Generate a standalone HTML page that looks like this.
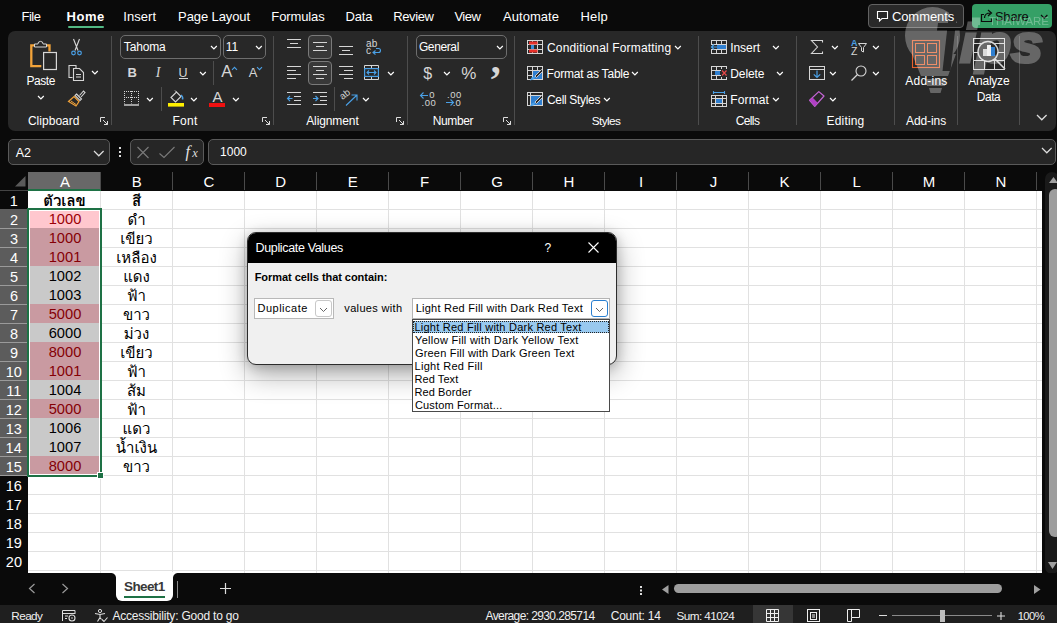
<!DOCTYPE html><html><head><meta charset="utf-8"><title>Excel</title><style>
*{box-sizing:border-box;margin:0;padding:0}
html,body{width:1057px;height:623px;overflow:hidden;background:#0a0a0a}
body{position:relative;font-family:"Liberation Sans","DejaVu Sans",sans-serif;color:#fff;font-size:12px}
.a{position:absolute;white-space:nowrap}
.t{position:absolute;white-space:nowrap;color:#fff}
.sf{font-family:"Liberation Serif","DejaVu Serif",serif}
.sep{position:absolute;width:1px;background:#4d4d4d;top:36px;height:89px}
.box{position:absolute;border:1px solid #6e6e6e;border-radius:5px;background:#282828;height:24px;top:35px}
.th{font-family:"Liberation Sans","Loma","Noto Sans Thai","Sarabun","DejaVu Sans",sans-serif}
.c{position:absolute;width:71px;height:18px;text-align:center;font-size:14.67px;line-height:18px;color:#000}
.c.th{font-size:15px;line-height:20px}
svg{position:absolute;overflow:visible}
</style></head><body>
<div class="t" style="left:21.4px;top:9px;font-size:13px;line-height:15px;height:15px;letter-spacing:-0.43px;">File</div>
<div class="t" style="left:66.6px;top:9px;font-size:13px;line-height:15px;height:15px;letter-spacing:0.53px;font-weight:bold;">Home</div>
<div class="t" style="left:123.3px;top:9px;font-size:13px;line-height:15px;height:15px;letter-spacing:0.06px;">Insert</div>
<div class="t" style="left:178.1px;top:9px;font-size:13px;line-height:15px;height:15px;letter-spacing:-0.1px;">Page Layout</div>
<div class="t" style="left:271.3px;top:9px;font-size:13px;line-height:15px;height:15px;letter-spacing:-0.11px;">Formulas</div>
<div class="t" style="left:345.6px;top:9px;font-size:13px;line-height:15px;height:15px;letter-spacing:-0.17px;">Data</div>
<div class="t" style="left:393.2px;top:9px;font-size:13px;line-height:15px;height:15px;letter-spacing:-0.38px;">Review</div>
<div class="t" style="left:454.4px;top:9px;font-size:13px;line-height:15px;height:15px;letter-spacing:-0.5px;">View</div>
<div class="t" style="left:503px;top:9px;font-size:13px;line-height:15px;height:15px;letter-spacing:0.04px;">Automate</div>
<div class="t" style="left:580.4px;top:9px;font-size:13px;line-height:15px;height:15px;letter-spacing:0.23px;">Help</div>
<div class="a" style="left:67.5px;top:26px;width:36.5px;height:2px;background:#52b884;border-radius:1px"></div>
<div class="a" style="left:868px;top:4px;width:96px;height:24px;background:#292929;border:1px solid #626262;border-radius:4px"></div>
<svg style="left:876px;top:10px" width="13" height="13" viewBox="0 0 13 13"><path d="M1.5 1.5h10v7h-5.5l-2.5 2.5v-2.5h-2z" fill="none" stroke="#fff" stroke-width="1.1"/></svg>
<div class="t" style="left:891.9px;top:9px;font-size:13px;line-height:15px;height:15px;letter-spacing:-0.07px;">Comments</div>
<div class="a" style="left:972px;top:4px;width:80px;height:24px;background:#35a066;border-radius:4px"></div>
<svg style="left:980px;top:9px" width="14" height="14" viewBox="0 0 14 14"><path d="M4 5.5h-2.5v7h10v-3M4.5 9c0-3.5 2-5 6-5M8 1l3.5 3-3.5 3" fill="none" stroke="#0c0c0c" stroke-width="1.2"/></svg>
<div class="t" style="left:994.9px;top:9px;font-size:13px;line-height:15px;height:15px;letter-spacing:-0.2px;color:#0c0c0c;">Share</div>
<svg style="left:1040.7px;top:15.25px" width="6.4" height="3.1" viewBox="0 0 6.4 3.1"><path d="M0 0l3.2 3.1 3.2 -3.1" fill="none" stroke="#0c0c0c" stroke-width="1.2" stroke-linejoin="miter"/></svg>
<div class="a" style="left:8px;top:31px;width:1048px;height:100px;background:#282828;border-radius:7px"></div>
<div class="sep" style="left:111px"></div>
<div class="sep" style="left:273px"></div>
<div class="sep" style="left:407px"></div>
<div class="sep" style="left:514px"></div>
<div class="sep" style="left:698px"></div>
<div class="sep" style="left:796px"></div>
<div class="sep" style="left:894px"></div>
<div class="sep" style="left:957px"></div>
<div class="sep" style="left:1019px"></div>
<svg style="left:29px;top:39px" width="30" height="32" viewBox="0 0 30 32">
<path d="M6 6.4h-3.7v20.7h10" fill="none" stroke="#f2a33a" stroke-width="2.3"/><path d="M17 6.4h3.5v6" fill="none" stroke="#f2a33a" stroke-width="2.3"/>
<path d="M5.5 8v-3h3.4a2.6 2.6 0 0 1 5.2 0h3.4v3z" fill="#282828" stroke="#d6d6d6" stroke-width="1"/>
<rect x="14.6" y="13.5" width="12.8" height="17" fill="#282828" stroke="#d6d6d6" stroke-width="1.2"/></svg>
<div class="t" style="left:26.4px;top:74px;font-size:12px;line-height:14px;height:14px;letter-spacing:-0.4px;">Paste</div>
<svg style="left:37.5px;top:95.95px" width="5.8" height="2.9" viewBox="0 0 5.8 2.9"><path d="M0 0l2.9 2.9 2.9 -2.9" fill="none" stroke="#fff" stroke-width="1.2" stroke-linejoin="miter"/></svg>
<svg style="left:70.7px;top:39px" width="11" height="17" viewBox="0 0 11 17"><path d="M2.5 0l4.5 11.5M8.5 0l-4.5 11.5" stroke="#d6d6d6" stroke-width="1.1" fill="none"/><circle cx="2.5" cy="14" r="1.8" fill="none" stroke="#4aa0e6" stroke-width="1.2"/><circle cx="8.5" cy="14" r="1.8" fill="none" stroke="#4aa0e6" stroke-width="1.2"/></svg>
<svg style="left:68px;top:64px" width="17" height="18" viewBox="0 0 17 18"><path d="M4.5 13.5h-3.5v-12h7v3" fill="none" stroke="#d6d6d6" stroke-width="1.1"/><path d="M5.5 4.5h6l4 4v8h-10z" fill="#282828" stroke="#d6d6d6" stroke-width="1.1"/><path d="M8 10.5h5M8 13h5" stroke="#d6d6d6" stroke-width="1"/></svg>
<svg style="left:91.5px;top:71.35px" width="5.8" height="2.9" viewBox="0 0 5.8 2.9"><path d="M0 0l2.9 2.9 2.9 -2.9" fill="none" stroke="#fff" stroke-width="1.2" stroke-linejoin="miter"/></svg>
<svg style="left:68px;top:90px" width="18" height="17" viewBox="0 0 18 17"><path d="M11.5 5.5l4-4.5 1.5 1.5-4 4.5" fill="none" stroke="#d6d6d6" stroke-width="1.1"/><path d="M8.5 4l5 5-1.5 1.5-5-5z" fill="none" stroke="#d6d6d6" stroke-width="1.1"/><path d="M6 6.5l5 5-3 4.5-7.5-4.5z" fill="none" stroke="#f2a33a" stroke-width="1.2"/><path d="M3 11l5 3.5" stroke="#f2a33a" stroke-width="1"/></svg>
<div class="t" style="left:27.9px;top:114px;font-size:12px;line-height:14px;height:14px;letter-spacing:0.03px;">Clipboard</div>
<svg style="left:100px;top:117px" width="8" height="8" viewBox="0 0 8 8"><path d="M0.5 5v-4.5h4.5M3 3l4.5 4.5M7.5 4v3.5h-3.5" fill="none" stroke="#ddd" stroke-width="1"/></svg>
<div class="box" style="left:120px;width:101px"></div>
<div class="t" style="left:123.8px;top:40px;font-size:12px;line-height:14px;height:14px;letter-spacing:-0.16px;">Tahoma</div>
<svg style="left:211.4px;top:45.75px" width="5.8" height="2.9" viewBox="0 0 5.8 2.9"><path d="M0 0l2.9 2.9 2.9 -2.9" fill="none" stroke="#fff" stroke-width="1.2" stroke-linejoin="miter"/></svg>
<div class="box" style="left:223px;width:43px"></div>
<div class="t" style="left:225.7px;top:40px;font-size:12px;line-height:14px;height:14px;">11</div>
<svg style="left:256.4px;top:45.75px" width="5.8" height="2.9" viewBox="0 0 5.8 2.9"><path d="M0 0l2.9 2.9 2.9 -2.9" fill="none" stroke="#fff" stroke-width="1.2" stroke-linejoin="miter"/></svg>
<div class="t" style="left:127.4px;top:65px;font-size:13px;line-height:15px;height:15px;font-weight:bold;color:#d6d6d6;">B</div>
<div class="t sf" style="left:155.65px;top:65px;font-size:14px;line-height:15px;height:15px;font-style:italic;color:#d6d6d6;">I</div>
<div class="t" style="left:178.6px;top:66px;font-size:12.5px;line-height:14px;height:14px;color:#d6d6d6;">U</div>
<div class="a" style="left:179px;top:78px;width:8.5px;height:1px;background:#d6d6d6;"></div>
<svg style="left:199.9px;top:71.75px" width="5.8" height="2.9" viewBox="0 0 5.8 2.9"><path d="M0 0l2.9 2.9 2.9 -2.9" fill="none" stroke="#fff" stroke-width="1.2" stroke-linejoin="miter"/></svg>
<div class="a" style="left:213px;top:61px;width:1px;height:24px;background:#4d4d4d;"></div>
<div class="t" style="left:221.3px;top:62px;font-size:16.5px;line-height:18px;height:18px;color:#d6d6d6;">A</div>
<svg style="left:231.5px;top:66.5px" width="5" height="3" viewBox="0 0 5 3"><path d="M0 2.8l2.5-2.5 2.5 2.5" fill="none" stroke="#4aa0e6" stroke-width="1.1"/></svg>
<div class="t" style="left:248.7px;top:65px;font-size:13px;line-height:15px;height:15px;color:#d6d6d6;">A</div>
<svg style="left:256.5px;top:66.5px" width="5" height="3" viewBox="0 0 5 3"><path d="M0 0.2l2.5 2.5 2.5-2.5" fill="none" stroke="#4aa0e6" stroke-width="1.1"/></svg>
<svg style="left:124px;top:91px" width="15" height="15" viewBox="0 0 15 15"><path d="M0.5 0v12.5M7.5 0v12.5M14.5 0v12.5" fill="none" stroke="#d6d6d6" stroke-width="1" stroke-dasharray="1 1"/><path d="M0 0.5h15M0 6.5h15" fill="none" stroke="#d6d6d6" stroke-width="1" stroke-dasharray="1 1"/><path d="M0 14h15" stroke="#d6d6d6" stroke-width="1.4"/></svg>
<svg style="left:147.4px;top:97.85px" width="5.8" height="2.9" viewBox="0 0 5.8 2.9"><path d="M0 0l2.9 2.9 2.9 -2.9" fill="none" stroke="#fff" stroke-width="1.2" stroke-linejoin="miter"/></svg>
<div class="a" style="left:161px;top:87px;width:1px;height:24px;background:#4d4d4d;"></div>
<svg style="left:168px;top:90px" width="16" height="17" viewBox="0 0 16 17"><path d="M3 7.5l5.5-5.5 4.5 4.5-5.5 5.5z" fill="none" stroke="#d6d6d6" stroke-width="1.1"/><path d="M8.5 2l-1.5-1.5" stroke="#d6d6d6" stroke-width="1"/><path d="M13 5c1.5 1.2 2 3 1.5 4.5" fill="none" stroke="#4aa0e6" stroke-width="1.5"/><rect x="0" y="13" width="16" height="3.6" fill="#ffef00"/></svg>
<svg style="left:191.4px;top:97.85px" width="5.8" height="2.9" viewBox="0 0 5.8 2.9"><path d="M0 0l2.9 2.9 2.9 -2.9" fill="none" stroke="#fff" stroke-width="1.2" stroke-linejoin="miter"/></svg>
<div class="t" style="left:212.6px;top:88px;font-size:15px;line-height:17px;height:17px;color:#d6d6d6;">A</div>
<div class="a" style="left:209px;top:103px;width:16px;height:3.6px;background:#f01010;"></div>
<svg style="left:232.7px;top:97.85px" width="5.8" height="2.9" viewBox="0 0 5.8 2.9"><path d="M0 0l2.9 2.9 2.9 -2.9" fill="none" stroke="#fff" stroke-width="1.2" stroke-linejoin="miter"/></svg>
<div class="t" style="left:172.4px;top:114px;font-size:12px;line-height:14px;height:14px;letter-spacing:0.27px;">Font</div>
<svg style="left:262px;top:117px" width="8" height="8" viewBox="0 0 8 8"><path d="M0.5 5v-4.5h4.5M3 3l4.5 4.5M7.5 4v3.5h-3.5" fill="none" stroke="#ddd" stroke-width="1"/></svg>
<svg style="left:287px;top:39px" width="14" height="12" viewBox="0 0 14 12"><path d="M0 0.5h14M3 4.5h8M0 8.5h14" stroke="#d6d6d6" stroke-width="1.1"/></svg>
<div class="a" style="left:308px;top:35px;width:24px;height:24px;background:#383838;border:1px solid #7a7a7a;border-radius:4px"></div>
<svg style="left:313px;top:42px" width="14" height="12" viewBox="0 0 14 12"><path d="M0 0.5h14M3 4.5h8M0 8.5h14" stroke="#d6d6d6" stroke-width="1.1"/></svg>
<svg style="left:339px;top:46px" width="14" height="12" viewBox="0 0 14 12"><path d="M0 0.5h14M3 4.5h8M0 8.5h14" stroke="#d6d6d6" stroke-width="1.1"/></svg>
<div class="t" style="left:366.1px;top:38px;font-size:10px;line-height:11px;height:11px;color:#d6d6d6;">ab</div>
<div class="t" style="left:365.95px;top:45px;font-size:10px;line-height:11px;height:11px;color:#d6d6d6;">c</div>
<svg style="left:371.5px;top:47.5px" width="9" height="7" viewBox="0 0 9 7"><path d="M4 0.5h2.5a2 2 0 0 1 0 4h-5.5M3.5 2.5l-2.5 2 2.5 2" fill="none" stroke="#4aa0e6" stroke-width="1.1"/></svg>
<svg style="left:287px;top:66px" width="14" height="16" viewBox="0 0 14 16"><path d="M0 0.5h14M0 4.5h9M0 8.5h14M0 12.5h9" stroke="#d6d6d6" stroke-width="1.1"/></svg>
<div class="a" style="left:308px;top:61px;width:24px;height:24px;background:#383838;border:1px solid #7a7a7a;border-radius:4px"></div>
<svg style="left:313px;top:66px" width="14" height="16" viewBox="0 0 14 16"><path d="M0 0.5h14M3 4.5h8M0 8.5h14M3 12.5h8" stroke="#d6d6d6" stroke-width="1.1"/></svg>
<svg style="left:339px;top:66px" width="14" height="16" viewBox="0 0 14 16"><path d="M0 0.5h14M5 4.5h9M0 8.5h14M5 12.5h9" stroke="#d6d6d6" stroke-width="1.1"/></svg>
<svg style="left:364px;top:65px" width="15" height="15" viewBox="0 0 15 15"><path d="M0.5 0.5h14v14h-14zM0.5 3.5h14M0.5 11.5h14M7.5 0.5v3M7.5 11.5v3" fill="none" stroke="#d6d6d6" stroke-width="1"/><rect x="0.6" y="3.6" width="13.8" height="7.8" fill="#282828" stroke="#4aa0e6" stroke-width="1.2"/><path d="M3 7.5h9M5 5.5l-2 2 2 2M10 5.5l2 2-2 2" fill="none" stroke="#4aa0e6" stroke-width="1.1"/></svg>
<svg style="left:387.9px;top:71.75px" width="5.8" height="2.9" viewBox="0 0 5.8 2.9"><path d="M0 0l2.9 2.9 2.9 -2.9" fill="none" stroke="#fff" stroke-width="1.2" stroke-linejoin="miter"/></svg>
<svg style="left:287px;top:92px" width="14" height="14" viewBox="0 0 14 14"><path d="M0 0.5h14M7 4.5h7M7 8.5h7M0 12.5h14" stroke="#d6d6d6" stroke-width="1.1"/><path d="M5.5 6.5h-5M3 4l-2.5 2.5 2.5 2.5" fill="none" stroke="#4aa0e6" stroke-width="1.1"/></svg>
<svg style="left:313px;top:92px" width="14" height="14" viewBox="0 0 14 14"><path d="M0 0.5h14M7 4.5h7M7 8.5h7M0 12.5h14" stroke="#d6d6d6" stroke-width="1.1"/><path d="M0 6.5h5M2.5 4l2.5 2.5-2.5 2.5" fill="none" stroke="#4aa0e6" stroke-width="1.1"/></svg>
<div class="a" style="left:334px;top:87px;width:1px;height:24px;background:#4d4d4d;"></div>
<svg style="left:341px;top:91px" width="17" height="15" viewBox="0 0 17 15"><text x="0" y="0" transform="translate(1.5 9) rotate(-38)" font-family="Liberation Sans,sans-serif" font-size="9.5" fill="#d6d6d6">ab</text><path d="M5 14.5l10.5-10M10.5 4h5.5v5.5" fill="none" stroke="#4aa0e6" stroke-width="1.1"/></svg>
<svg style="left:362.6px;top:97.85px" width="5.8" height="2.9" viewBox="0 0 5.8 2.9"><path d="M0 0l2.9 2.9 2.9 -2.9" fill="none" stroke="#fff" stroke-width="1.2" stroke-linejoin="miter"/></svg>
<div class="t" style="left:306.2px;top:114px;font-size:12px;line-height:14px;height:14px;letter-spacing:-0.1px;">Alignment</div>
<svg style="left:396px;top:117px" width="8" height="8" viewBox="0 0 8 8"><path d="M0.5 5v-4.5h4.5M3 3l4.5 4.5M7.5 4v3.5h-3.5" fill="none" stroke="#ddd" stroke-width="1"/></svg>
<div class="box" style="left:416px;width:91px"></div>
<div class="t" style="left:418.9px;top:40px;font-size:12px;line-height:14px;height:14px;letter-spacing:-0.38px;">General</div>
<svg style="left:497.4px;top:45.75px" width="5.8" height="2.9" viewBox="0 0 5.8 2.9"><path d="M0 0l2.9 2.9 2.9 -2.9" fill="none" stroke="#fff" stroke-width="1.2" stroke-linejoin="miter"/></svg>
<div class="t" style="left:423.2px;top:65px;font-size:16px;line-height:17px;height:17px;color:#d6d6d6;">$</div>
<svg style="left:443.9px;top:71.75px" width="5.8" height="2.9" viewBox="0 0 5.8 2.9"><path d="M0 0l2.9 2.9 2.9 -2.9" fill="none" stroke="#fff" stroke-width="1.2" stroke-linejoin="miter"/></svg>
<div class="t" style="left:461.25px;top:64px;font-size:17px;line-height:19px;height:19px;color:#d6d6d6;">%</div>
<div class="t sf" style="left:490.75px;top:37px;font-size:40px;line-height:45px;height:45px;font-weight:bold;color:#d6d6d6;">,</div>
<div class="t" style="left:429.35px;top:89px;font-size:9.5px;line-height:11px;height:11px;color:#d6d6d6;">0</div>
<div class="t" style="left:421.6px;top:97px;font-size:9.5px;line-height:11px;height:11px;letter-spacing:0.55px;color:#d6d6d6;">.00</div>
<svg style="left:420px;top:92px" width="8" height="7" viewBox="0 0 8 7"><path d="M8 3.5h-7.5M3.5 0.5l-3 3 3 3" fill="none" stroke="#4aa0e6" stroke-width="1.1"/></svg>
<div class="t" style="left:447.1px;top:89px;font-size:9.5px;line-height:11px;height:11px;letter-spacing:0.55px;color:#d6d6d6;">.00</div>
<div class="t" style="left:452.8px;top:97px;font-size:9.5px;line-height:11px;height:11px;color:#d6d6d6;">.0</div>
<svg style="left:446px;top:99px" width="8" height="7" viewBox="0 0 8 7"><path d="M0 3.5h7.5M4.5 0.5l3 3-3 3" fill="none" stroke="#4aa0e6" stroke-width="1.1"/></svg>
<div class="t" style="left:432.7px;top:114px;font-size:12px;line-height:14px;height:14px;letter-spacing:-0.36px;">Number</div>
<svg style="left:503px;top:117px" width="8" height="8" viewBox="0 0 8 8"><path d="M0.5 5v-4.5h4.5M3 3l4.5 4.5M7.5 4v3.5h-3.5" fill="none" stroke="#ddd" stroke-width="1"/></svg>
<svg style="left:527px;top:40px" width="16" height="14" viewBox="0 0 16 14"><rect x="0.5" y="0.5" width="15" height="13" fill="none" stroke="#d6d6d6"/><path d="M0.5 4.5h15M0.5 9.5h15M5.5 0.5v13M10.5 0.5v13" stroke="#d6d6d6" stroke-width="1"/><rect x="2" y="1.5" width="8.5" height="3" fill="#e8302a"/><rect x="2" y="9.5" width="8.5" height="3" fill="#e8302a"/><rect x="4" y="5" width="3" height="4" fill="#3b8fd9"/></svg>
<div class="t" style="left:547px;top:41px;font-size:12px;line-height:14px;height:14px;letter-spacing:0.16px;">Conditional Formatting</div>
<svg style="left:674.9px;top:46.05px" width="5.8" height="2.9" viewBox="0 0 5.8 2.9"><path d="M0 0l2.9 2.9 2.9 -2.9" fill="none" stroke="#fff" stroke-width="1.2" stroke-linejoin="miter"/></svg>
<svg style="left:527px;top:66px" width="16" height="14" viewBox="0 0 16 14"><rect x="0.5" y="0.5" width="15" height="13" fill="none" stroke="#d6d6d6"/><path d="M0.5 4.5h15M0.5 9.5h15M5.5 0.5v13M10.5 0.5v13" stroke="#d6d6d6" stroke-width="1"/><rect x="6" y="5" width="9" height="8" fill="#2f7fd0"/><path d="M14.5 3.5l-6.5 6.5 1.5 1.5 6.5-6.5z" fill="#282828" stroke="#d6d6d6" stroke-width="0.9"/><path d="M8 10l-3.5 1.5-1.5 3 3.5-1 1.5-2z" fill="#4aa0e6"/></svg>
<div class="t" style="left:546.6px;top:67px;font-size:12px;line-height:14px;height:14px;letter-spacing:-0.21px;">Format as Table</div>
<svg style="left:632.3px;top:72.05px" width="5.8" height="2.9" viewBox="0 0 5.8 2.9"><path d="M0 0l2.9 2.9 2.9 -2.9" fill="none" stroke="#fff" stroke-width="1.2" stroke-linejoin="miter"/></svg>
<svg style="left:527px;top:92px" width="16" height="14" viewBox="0 0 16 14"><rect x="0.5" y="0.5" width="15" height="13" fill="none" stroke="#d6d6d6"/><path d="M0.5 3.5h15M3.5 0.5v13" stroke="#d6d6d6" stroke-width="1"/><rect x="4" y="4" width="11" height="9" fill="#2f7fd0"/><path d="M14.5 3.5l-6.5 6.5 1.5 1.5 6.5-6.5z" fill="#282828" stroke="#d6d6d6" stroke-width="0.9"/><path d="M8 10l-3.5 1.5-1.5 3 3.5-1 1.5-2z" fill="#4aa0e6"/></svg>
<div class="t" style="left:547px;top:93px;font-size:12px;line-height:14px;height:14px;letter-spacing:-0.33px;">Cell Styles</div>
<svg style="left:603.6px;top:98.05px" width="5.8" height="2.9" viewBox="0 0 5.8 2.9"><path d="M0 0l2.9 2.9 2.9 -2.9" fill="none" stroke="#fff" stroke-width="1.2" stroke-linejoin="miter"/></svg>
<div class="t" style="left:591.8px;top:114px;font-size:11.75px;line-height:13px;height:13px;letter-spacing:-0.58px;">Styles</div>
<svg style="left:711px;top:40px" width="16" height="14" viewBox="0 0 16 14"><rect x="0.5" y="0.5" width="15" height="13" fill="none" stroke="#d6d6d6"/><path d="M0.5 4.5h15M0.5 9.5h15M5.5 0.5v13M10.5 0.5v13" stroke="#d6d6d6" stroke-width="1"/><rect x="6" y="5" width="9" height="4" fill="#2f7fd0"/><rect x="0" y="5" width="6" height="4" fill="#282828"/><path d="M6 7h-5.5M3 4.5l-2.5 2.5 2.5 2.5" fill="none" stroke="#4aa0e6" stroke-width="1.2"/></svg>
<div class="t" style="left:730.2px;top:41px;font-size:12px;line-height:14px;height:14px;letter-spacing:-0.04px;">Insert</div>
<svg style="left:772.5px;top:46.05px" width="5.8" height="2.9" viewBox="0 0 5.8 2.9"><path d="M0 0l2.9 2.9 2.9 -2.9" fill="none" stroke="#fff" stroke-width="1.2" stroke-linejoin="miter"/></svg>
<svg style="left:711px;top:66px" width="16" height="14" viewBox="0 0 16 14"><rect x="0.5" y="0.5" width="15" height="13" fill="none" stroke="#d6d6d6"/><path d="M0.5 4.5h15M0.5 9.5h15M5.5 0.5v13M10.5 0.5v13" stroke="#d6d6d6" stroke-width="1"/><rect x="4" y="5" width="5" height="4" fill="#2f7fd0"/><rect x="10" y="3" width="6.5" height="8" fill="#282828"/><path d="M11 4.5l4.5 5M15.5 4.5l-4.5 5" stroke="#e84848" stroke-width="1.2"/></svg>
<div class="t" style="left:730.3px;top:67px;font-size:12px;line-height:14px;height:14px;letter-spacing:-0.1px;">Delete</div>
<svg style="left:776.8px;top:72.05px" width="5.8" height="2.9" viewBox="0 0 5.8 2.9"><path d="M0 0l2.9 2.9 2.9 -2.9" fill="none" stroke="#fff" stroke-width="1.2" stroke-linejoin="miter"/></svg>
<svg style="left:711px;top:91px" width="16" height="16" viewBox="0 0 16 16"><path d="M2.5 1.5h11M2.5 0v3M13.5 0v3" stroke="#4aa0e6" stroke-width="1.1"/><rect x="0.5" y="4.5" width="15" height="11" fill="none" stroke="#d6d6d6"/><path d="M0.5 7.5h15M0.5 12.5h15M4.5 4.5v11M11.5 4.5v11" stroke="#d6d6d6" stroke-width="1"/><rect x="5" y="8" width="6" height="4" fill="#2f7fd0"/></svg>
<div class="t" style="left:730.3px;top:93px;font-size:12px;line-height:14px;height:14px;letter-spacing:0.12px;">Format</div>
<svg style="left:772.5px;top:98.05px" width="5.8" height="2.9" viewBox="0 0 5.8 2.9"><path d="M0 0l2.9 2.9 2.9 -2.9" fill="none" stroke="#fff" stroke-width="1.2" stroke-linejoin="miter"/></svg>
<div class="t" style="left:735.7px;top:114px;font-size:12px;line-height:14px;height:14px;letter-spacing:-0.62px;">Cells</div>
<svg style="left:811px;top:40px" width="12" height="14" viewBox="0 0 12 14"><path d="M11.5 2.5v-2h-11l6 6.5-6 6.5h11v-2" fill="none" stroke="#d6d6d6" stroke-width="1.1"/></svg>
<svg style="left:832.4px;top:46.05px" width="5.8" height="2.9" viewBox="0 0 5.8 2.9"><path d="M0 0l2.9 2.9 2.9 -2.9" fill="none" stroke="#fff" stroke-width="1.2" stroke-linejoin="miter"/></svg>
<div class="t" style="left:850.9px;top:38px;font-size:9px;line-height:10px;height:10px;font-weight:bold;color:#4aa0e6;">A</div>
<div class="t" style="left:850.9px;top:45px;font-size:10.5px;line-height:12px;height:12px;color:#d6d6d6;">Z</div>
<svg style="left:857.5px;top:43px" width="9" height="10" viewBox="0 0 9 10"><path d="M0.5 0.5h8l-3 4v4.5l-2-1v-3.5z" fill="none" stroke="#d6d6d6" stroke-width="1"/></svg>
<svg style="left:872.7px;top:46.05px" width="5.8" height="2.9" viewBox="0 0 5.8 2.9"><path d="M0 0l2.9 2.9 2.9 -2.9" fill="none" stroke="#fff" stroke-width="1.2" stroke-linejoin="miter"/></svg>
<svg style="left:809px;top:66px" width="16" height="14" viewBox="0 0 16 14"><rect x="0.5" y="0.5" width="15" height="13" fill="none" stroke="#d6d6d6"/><path d="M0.5 3.5h15" stroke="#d6d6d6"/><path d="M8 4.5v7M4.8 8.3l3.2 3.2 3.2-3.2" fill="none" stroke="#4aa0e6" stroke-width="1.2"/></svg>
<svg style="left:830.4px;top:72.05px" width="5.8" height="2.9" viewBox="0 0 5.8 2.9"><path d="M0 0l2.9 2.9 2.9 -2.9" fill="none" stroke="#fff" stroke-width="1.2" stroke-linejoin="miter"/></svg>
<svg style="left:851px;top:65px" width="16" height="16" viewBox="0 0 16 16"><circle cx="10" cy="6" r="5" fill="none" stroke="#d6d6d6" stroke-width="1.1"/><path d="M6.5 9.5l-6 6" stroke="#d6d6d6" stroke-width="1.3"/></svg>
<svg style="left:872.7px;top:72.05px" width="5.8" height="2.9" viewBox="0 0 5.8 2.9"><path d="M0 0l2.9 2.9 2.9 -2.9" fill="none" stroke="#fff" stroke-width="1.2" stroke-linejoin="miter"/></svg>
<svg style="left:809px;top:91px" width="16" height="16" viewBox="0 0 16 16"><path d="M0.6 9.3l9.2-8.7 5.2 4.4-9.2 10.3z" fill="none" stroke="#c565d6" stroke-width="1.2" stroke-linejoin="round"/><path d="M0.6 9.3l3-2.8 5.3 5.4-3.1 3.4z" fill="#b040c4"/></svg>
<svg style="left:830.4px;top:98.05px" width="5.8" height="2.9" viewBox="0 0 5.8 2.9"><path d="M0 0l2.9 2.9 2.9 -2.9" fill="none" stroke="#fff" stroke-width="1.2" stroke-linejoin="miter"/></svg>
<div class="t" style="left:826.5px;top:114px;font-size:12px;line-height:14px;height:14px;letter-spacing:0.18px;">Editing</div>
<svg style="left:912px;top:40px" width="28" height="28" viewBox="0 0 28 28"><rect x="0.5" y="0.5" width="27" height="27" fill="none" stroke="#e8602c" stroke-width="1.1"/><rect x="3.5" y="3.5" width="9" height="9" fill="none" stroke="#e8602c"/><rect x="15.5" y="3.5" width="9" height="9" fill="none" stroke="#e8602c"/><rect x="3.5" y="15.5" width="9" height="9" fill="none" stroke="#e8602c"/><rect x="15.5" y="15.5" width="9" height="9" fill="none" stroke="#e8602c"/></svg>
<div class="t" style="left:905.3px;top:74px;font-size:12px;line-height:14px;height:14px;letter-spacing:0.22px;">Add-ins</div>
<div class="t" style="left:906px;top:114px;font-size:12px;line-height:14px;height:14px;letter-spacing:-0.08px;">Add-ins</div>
<svg style="left:973px;top:38px" width="32" height="32" viewBox="0 0 32 32"><rect x="0.5" y="0.5" width="31" height="31" fill="none" stroke="#d6d6d6"/><path d="M0.5 5.5h31M0.5 14.5h31M0.5 22.5h31M11.5 5.5v26M21.5 5.5v26" stroke="#d6d6d6"/><circle cx="15" cy="13.5" r="10" fill="#2c2c2c" stroke="#d6d6d6" stroke-width="1.3"/><rect x="10" y="11" width="4" height="7" fill="#ccc"/><rect x="14" y="7" width="4" height="11" fill="#eee"/><rect x="18" y="9" width="4" height="9" fill="#2f7fd0"/><path d="M22 21l10 10" stroke="#d6d6d6" stroke-width="1.6"/></svg>
<div class="t" style="left:968.2px;top:74px;font-size:12px;line-height:14px;height:14px;letter-spacing:-0.22px;">Analyze</div>
<div class="t" style="left:976.7px;top:90px;font-size:12px;line-height:14px;height:14px;letter-spacing:-0.43px;">Data</div>
<svg style="left:1036.8px;top:115px" width="9.6" height="4.8" viewBox="0 0 9.6 4.8"><path d="M0 0l4.8 4.8 4.8 -4.8" fill="none" stroke="#ddd" stroke-width="1.3" stroke-linejoin="miter"/></svg>
<svg style="left:0;top:0;opacity:0.29" width="1057" height="110" viewBox="0 0 1057 110"><defs><mask id="wm"><rect x="880" y="0" width="177" height="110" fill="#fff"/><path d="M949.5 9h8l-7 62h-8z" fill="#000"/><path d="M938 23h30l-1 7.5h-30z" fill="#000"/></mask></defs><g mask="url(#wm)" fill="#fff"><ellipse cx="932.5" cy="35.5" rx="27.5" ry="28.5"/><path d="M912 54h44l-8 22h-27z"/><path d="M926 79h20l-1 7h-18zM929 88h13l-1.5 5h-10z"/></g><rect x="972" y="17.5" width="8" height="7.5" fill="#fff"/><text x="960" y="62" font-family="Liberation Sans,sans-serif" font-style="italic" font-weight="bold" font-size="53" fill="#fff" stroke="#fff" stroke-width="3" textLength="83" lengthAdjust="spacingAndGlyphs">ips</text><text x="989" y="24.7" font-family="Liberation Sans,sans-serif" font-size="10" fill="#fff" textLength="60" lengthAdjust="spacingAndGlyphs">THAIWARE</text></svg>
<div class="a" style="left:8px;top:139px;width:102px;height:26px;background:#262626;border:1px solid #5a5a5a;border-radius:5px"></div>
<div class="t" style="left:15.75px;top:146px;font-size:12.5px;line-height:14px;height:14px;">A2</div>
<svg style="left:94.3px;top:151.2px" width="9.6" height="4.8" viewBox="0 0 9.6 4.8"><path d="M0 0l4.8 4.8 4.8 -4.8" fill="none" stroke="#ddd" stroke-width="1.2" stroke-linejoin="miter"/></svg>
<div class="a" style="left:119px;top:147px;width:2px;height:2px;background:#ddd;box-shadow:0 4px 0 #ddd,0 8px 0 #ddd"></div>
<div class="a" style="left:130px;top:139px;width:74px;height:26px;background:#262626;border:1px solid #5a5a5a;border-radius:5px"></div>
<svg style="left:137px;top:146.5px" width="12" height="11" viewBox="0 0 12 11"><path d="M0.5 0l11 11M11.5 0l-11 11" stroke="#7a7a7a" stroke-width="1.1"/></svg>
<svg style="left:159px;top:146.5px" width="16" height="11" viewBox="0 0 16 11"><path d="M0.5 6.5l4.5 4 10.5-10.5" fill="none" stroke="#7a7a7a" stroke-width="1.1"/></svg>
<div class="t sf" style="left:185.45px;top:143px;font-size:16px;line-height:17px;height:17px;font-style:italic;color:#e4e4e4;">f</div>
<div class="t sf" style="left:192.35px;top:146px;font-size:12.5px;line-height:14px;height:14px;font-style:italic;color:#ddd;">x</div>
<div class="a" style="left:208px;top:139px;width:848px;height:26px;background:#262626;border:1px solid #5a5a5a;border-radius:5px"></div>
<div class="t" style="left:219.9px;top:145px;font-size:12px;line-height:14px;height:14px;letter-spacing:0.07px;">1000</div>
<svg style="left:1041.6px;top:148.2px" width="9.6" height="4.8" viewBox="0 0 9.6 4.8"><path d="M0 0l4.8 4.8 4.8 -4.8" fill="none" stroke="#ddd" stroke-width="1.2" stroke-linejoin="miter"/></svg>
<div class="a" style="left:28px;top:191px;width:1014px;height:382px;background:#fff;"></div>
<div class="a" style="left:100px;top:191px;width:1px;height:382px;background:#e1e1e1;"></div>
<div class="a" style="left:172px;top:191px;width:1px;height:382px;background:#e1e1e1;"></div>
<div class="a" style="left:244px;top:191px;width:1px;height:382px;background:#e1e1e1;"></div>
<div class="a" style="left:316px;top:191px;width:1px;height:382px;background:#e1e1e1;"></div>
<div class="a" style="left:388px;top:191px;width:1px;height:382px;background:#e1e1e1;"></div>
<div class="a" style="left:460px;top:191px;width:1px;height:382px;background:#e1e1e1;"></div>
<div class="a" style="left:532px;top:191px;width:1px;height:382px;background:#e1e1e1;"></div>
<div class="a" style="left:604px;top:191px;width:1px;height:382px;background:#e1e1e1;"></div>
<div class="a" style="left:676px;top:191px;width:1px;height:382px;background:#e1e1e1;"></div>
<div class="a" style="left:748px;top:191px;width:1px;height:382px;background:#e1e1e1;"></div>
<div class="a" style="left:820px;top:191px;width:1px;height:382px;background:#e1e1e1;"></div>
<div class="a" style="left:892px;top:191px;width:1px;height:382px;background:#e1e1e1;"></div>
<div class="a" style="left:964px;top:191px;width:1px;height:382px;background:#e1e1e1;"></div>
<div class="a" style="left:1036px;top:191px;width:1px;height:382px;background:#e1e1e1;"></div>
<div class="a" style="left:28px;top:209px;width:1014px;height:1px;background:#e1e1e1;"></div>
<div class="a" style="left:28px;top:228px;width:1014px;height:1px;background:#e1e1e1;"></div>
<div class="a" style="left:28px;top:247px;width:1014px;height:1px;background:#e1e1e1;"></div>
<div class="a" style="left:28px;top:266px;width:1014px;height:1px;background:#e1e1e1;"></div>
<div class="a" style="left:28px;top:285px;width:1014px;height:1px;background:#e1e1e1;"></div>
<div class="a" style="left:28px;top:304px;width:1014px;height:1px;background:#e1e1e1;"></div>
<div class="a" style="left:28px;top:323px;width:1014px;height:1px;background:#e1e1e1;"></div>
<div class="a" style="left:28px;top:342px;width:1014px;height:1px;background:#e1e1e1;"></div>
<div class="a" style="left:28px;top:361px;width:1014px;height:1px;background:#e1e1e1;"></div>
<div class="a" style="left:28px;top:380px;width:1014px;height:1px;background:#e1e1e1;"></div>
<div class="a" style="left:28px;top:399px;width:1014px;height:1px;background:#e1e1e1;"></div>
<div class="a" style="left:28px;top:418px;width:1014px;height:1px;background:#e1e1e1;"></div>
<div class="a" style="left:28px;top:437px;width:1014px;height:1px;background:#e1e1e1;"></div>
<div class="a" style="left:28px;top:456px;width:1014px;height:1px;background:#e1e1e1;"></div>
<div class="a" style="left:28px;top:475px;width:1014px;height:1px;background:#e1e1e1;"></div>
<div class="a" style="left:28px;top:494px;width:1014px;height:1px;background:#e1e1e1;"></div>
<div class="a" style="left:28px;top:513px;width:1014px;height:1px;background:#e1e1e1;"></div>
<div class="a" style="left:28px;top:532px;width:1014px;height:1px;background:#e1e1e1;"></div>
<div class="a" style="left:28px;top:551px;width:1014px;height:1px;background:#e1e1e1;"></div>
<div class="a" style="left:28px;top:570px;width:1014px;height:1px;background:#e1e1e1;"></div>
<div class="a" style="left:28px;top:172px;width:73px;height:17px;background:#686868;"></div>
<div class="a" style="left:28px;top:189px;width:73px;height:2px;background:#1e7145;"></div>
<svg style="left:14.5px;top:176px" width="11" height="11" viewBox="0 0 11 11"><path d="M10.5 0v10.5h-10.5z" fill="#5a5a5a"/></svg>
<div class="a" style="left:0px;top:190px;width:28px;height:1px;background:#444;"></div>
<div class="t" style="left:60px;top:173px;font-size:15px;line-height:17px;height:17px;">A</div>
<div class="t" style="left:131.8px;top:173px;font-size:15px;line-height:17px;height:17px;">B</div>
<div class="a" style="left:100px;top:172px;width:1px;height:18px;background:#4a4a4a;"></div>
<div class="t" style="left:203.5px;top:173px;font-size:15px;line-height:17px;height:17px;">C</div>
<div class="a" style="left:172px;top:172px;width:1px;height:18px;background:#4a4a4a;"></div>
<div class="t" style="left:275.35px;top:173px;font-size:15px;line-height:17px;height:17px;">D</div>
<div class="a" style="left:244px;top:172px;width:1px;height:18px;background:#4a4a4a;"></div>
<div class="t" style="left:347.7px;top:173px;font-size:15px;line-height:17px;height:17px;">E</div>
<div class="a" style="left:316px;top:172px;width:1px;height:18px;background:#4a4a4a;"></div>
<div class="t" style="left:420.1px;top:173px;font-size:15px;line-height:17px;height:17px;">F</div>
<div class="a" style="left:388px;top:172px;width:1px;height:18px;background:#4a4a4a;"></div>
<div class="t" style="left:491.35px;top:173px;font-size:15px;line-height:17px;height:17px;">G</div>
<div class="a" style="left:460px;top:172px;width:1px;height:18px;background:#4a4a4a;"></div>
<div class="t" style="left:563.6px;top:173px;font-size:15px;line-height:17px;height:17px;">H</div>
<div class="a" style="left:532px;top:172px;width:1px;height:18px;background:#4a4a4a;"></div>
<div class="t" style="left:638.9px;top:173px;font-size:15px;line-height:17px;height:17px;">I</div>
<div class="a" style="left:604px;top:172px;width:1px;height:18px;background:#4a4a4a;"></div>
<div class="t" style="left:709.7px;top:173px;font-size:15px;line-height:17px;height:17px;">J</div>
<div class="a" style="left:676px;top:172px;width:1px;height:18px;background:#4a4a4a;"></div>
<div class="t" style="left:779.5px;top:173px;font-size:15px;line-height:17px;height:17px;">K</div>
<div class="a" style="left:748px;top:172px;width:1px;height:18px;background:#4a4a4a;"></div>
<div class="t" style="left:852.45px;top:173px;font-size:15px;line-height:17px;height:17px;">L</div>
<div class="a" style="left:820px;top:172px;width:1px;height:18px;background:#4a4a4a;"></div>
<div class="t" style="left:922.75px;top:173px;font-size:15px;line-height:17px;height:17px;">M</div>
<div class="a" style="left:892px;top:172px;width:1px;height:18px;background:#4a4a4a;"></div>
<div class="t" style="left:995.6px;top:173px;font-size:15px;line-height:17px;height:17px;">N</div>
<div class="a" style="left:964px;top:172px;width:1px;height:18px;background:#4a4a4a;"></div>
<div class="a" style="left:1036px;top:172px;width:1px;height:18px;background:#4a4a4a;"></div>
<div class="a" style="left:0px;top:191px;width:28px;height:382px;background:#0a0a0a;"></div>
<div class="a" style="left:0px;top:209px;width:27px;height:266px;background:#5c5c5c;"></div>
<div class="t" style="left:9.75px;top:193px;font-size:14.5px;line-height:16px;height:16px;">1</div>
<div class="t" style="left:10px;top:212px;font-size:14.5px;line-height:16px;height:16px;">2</div>
<div class="a" style="left:0px;top:228px;width:27px;height:1px;background:#9a9a9a;"></div>
<div class="t" style="left:10.05px;top:231px;font-size:14.5px;line-height:16px;height:16px;">3</div>
<div class="a" style="left:0px;top:247px;width:27px;height:1px;background:#9a9a9a;"></div>
<div class="t" style="left:10.05px;top:250px;font-size:14.5px;line-height:16px;height:16px;">4</div>
<div class="a" style="left:0px;top:266px;width:27px;height:1px;background:#9a9a9a;"></div>
<div class="t" style="left:9.95px;top:269px;font-size:14.5px;line-height:16px;height:16px;">5</div>
<div class="a" style="left:0px;top:285px;width:27px;height:1px;background:#9a9a9a;"></div>
<div class="t" style="left:9.95px;top:288px;font-size:14.5px;line-height:16px;height:16px;">6</div>
<div class="a" style="left:0px;top:304px;width:27px;height:1px;background:#9a9a9a;"></div>
<div class="t" style="left:10px;top:307px;font-size:14.5px;line-height:16px;height:16px;">7</div>
<div class="a" style="left:0px;top:323px;width:27px;height:1px;background:#9a9a9a;"></div>
<div class="t" style="left:10px;top:326px;font-size:14.5px;line-height:16px;height:16px;">8</div>
<div class="a" style="left:0px;top:342px;width:27px;height:1px;background:#9a9a9a;"></div>
<div class="t" style="left:9.95px;top:345px;font-size:14.5px;line-height:16px;height:16px;">9</div>
<div class="a" style="left:0px;top:361px;width:27px;height:1px;background:#9a9a9a;"></div>
<div class="t" style="left:5.65px;top:364px;font-size:14.5px;line-height:16px;height:16px;">10</div>
<div class="a" style="left:0px;top:380px;width:27px;height:1px;background:#9a9a9a;"></div>
<div class="t" style="left:6.25px;top:383px;font-size:14.5px;line-height:16px;height:16px;">11</div>
<div class="a" style="left:0px;top:399px;width:27px;height:1px;background:#9a9a9a;"></div>
<div class="t" style="left:5.75px;top:402px;font-size:14.5px;line-height:16px;height:16px;">12</div>
<div class="a" style="left:0px;top:418px;width:27px;height:1px;background:#9a9a9a;"></div>
<div class="t" style="left:5.7px;top:421px;font-size:14.5px;line-height:16px;height:16px;">13</div>
<div class="a" style="left:0px;top:437px;width:27px;height:1px;background:#9a9a9a;"></div>
<div class="t" style="left:5.6px;top:440px;font-size:14.5px;line-height:16px;height:16px;">14</div>
<div class="a" style="left:0px;top:456px;width:27px;height:1px;background:#9a9a9a;"></div>
<div class="t" style="left:5.65px;top:459px;font-size:14.5px;line-height:16px;height:16px;">15</div>
<div class="a" style="left:0px;top:475px;width:27px;height:1px;background:#9a9a9a;"></div>
<div class="t" style="left:5.7px;top:478px;font-size:14.5px;line-height:16px;height:16px;">16</div>
<div class="t" style="left:5.75px;top:497px;font-size:14.5px;line-height:16px;height:16px;">17</div>
<div class="t" style="left:5.7px;top:516px;font-size:14.5px;line-height:16px;height:16px;">18</div>
<div class="t" style="left:5.7px;top:535px;font-size:14.5px;line-height:16px;height:16px;">19</div>
<div class="t" style="left:5.85px;top:554px;font-size:14.5px;line-height:16px;height:16px;">20</div>
<div class="c th" style="left:29px;top:191px;font-weight:bold">ตัวเลข</div>
<div class="c th" style="left:101px;top:191px;font-weight:bold">สี</div>
<div class="c" style="left:29px;top:210px;height:18px;line-height:18px;padding-left:1px;background:#ffc7ce;color:#9c0006">1000</div>
<div class="c th" style="left:101px;top:210px">ดำ</div>
<div class="c" style="left:29px;top:228px;height:19px;line-height:20px;padding-left:1px;background:#c99aa1;color:#850005">1000</div>
<div class="c th" style="left:101px;top:229px">เขียว</div>
<div class="c" style="left:29px;top:247px;height:19px;line-height:20px;padding-left:1px;background:#c99aa1;color:#850005">1001</div>
<div class="c th" style="left:101px;top:248px">เหลือง</div>
<div class="c" style="left:29px;top:266px;height:19px;line-height:20px;padding-left:1px;background:#c9c9c9;color:#000">1002</div>
<div class="c th" style="left:101px;top:267px">แดง</div>
<div class="c" style="left:29px;top:285px;height:19px;line-height:20px;padding-left:1px;background:#c9c9c9;color:#000">1003</div>
<div class="c th" style="left:101px;top:286px">ฟ้า</div>
<div class="c" style="left:29px;top:304px;height:19px;line-height:20px;padding-left:1px;background:#c99aa1;color:#850005">5000</div>
<div class="c th" style="left:101px;top:305px">ขาว</div>
<div class="c" style="left:29px;top:323px;height:19px;line-height:20px;padding-left:1px;background:#c9c9c9;color:#000">6000</div>
<div class="c th" style="left:101px;top:324px">ม่วง</div>
<div class="c" style="left:29px;top:342px;height:19px;line-height:20px;padding-left:1px;background:#c99aa1;color:#850005">8000</div>
<div class="c th" style="left:101px;top:343px">เขียว</div>
<div class="c" style="left:29px;top:361px;height:19px;line-height:20px;padding-left:1px;background:#c99aa1;color:#850005">1001</div>
<div class="c th" style="left:101px;top:362px">ฟ้า</div>
<div class="c" style="left:29px;top:380px;height:19px;line-height:20px;padding-left:1px;background:#c9c9c9;color:#000">1004</div>
<div class="c th" style="left:101px;top:381px">ส้ม</div>
<div class="c" style="left:29px;top:399px;height:19px;line-height:20px;padding-left:1px;background:#c99aa1;color:#850005">5000</div>
<div class="c th" style="left:101px;top:400px">ฟ้า</div>
<div class="c" style="left:29px;top:418px;height:19px;line-height:20px;padding-left:1px;background:#c9c9c9;color:#000">1006</div>
<div class="c th" style="left:101px;top:419px">แดว</div>
<div class="c" style="left:29px;top:437px;height:19px;line-height:20px;padding-left:1px;background:#c9c9c9;color:#000">1007</div>
<div class="c th" style="left:101px;top:438px">น้ำเงิน</div>
<div class="c" style="left:29px;top:456px;height:19px;line-height:20px;padding-left:1px;background:#c99aa1;color:#850005">8000</div>
<div class="c th" style="left:101px;top:457px">ขาว</div>
<div class="a" style="left:27px;top:208px;width:75px;height:269px;background:transparent;border:2px solid #1e7145;box-shadow:inset 0 0 0 1px #fff"></div>
<div class="a" style="left:97px;top:472px;width:7px;height:7px;background:#1e7145;border:1px solid #fff"></div>
<div class="a" style="left:1042px;top:171px;width:15px;height:402px;background:#0a0a0a;"></div>
<div class="a" style="left:1045px;top:172px;width:14px;height:402px;background:#1a1a1a;border-radius:7px"></div>
<svg style="left:1049px;top:177px" width="9" height="6" viewBox="0 0 9 6"><path d="M0 6l4.5-6 4.5 6z" fill="#a0a0a0"/></svg>
<div class="a" style="left:1049px;top:189px;width:12px;height:348px;background:#9d9d9d;border-radius:6px"></div>
<svg style="left:1048px;top:562px" width="9" height="7" viewBox="0 0 9 7"><path d="M0 0l4.5 7 4.5-7z" fill="#a0a0a0"/></svg>
<div class="a" style="left:0px;top:573px;width:1057px;height:33px;background:#0a0a0a;"></div>
<svg style="left:28.5px;top:584px" width="6" height="9" viewBox="0 0 6 9"><path d="M5.5 0l-5 4.5 5 4.5" fill="none" stroke="#9a9a9a" stroke-width="1.2"/></svg>
<svg style="left:61.5px;top:584px" width="6" height="9" viewBox="0 0 6 9"><path d="M0.5 0l5 4.5-5 4.5" fill="none" stroke="#9a9a9a" stroke-width="1.2"/></svg>
<div class="a" style="left:116px;top:572px;width:57px;height:29px;background:#fff;border-radius:0 0 6px 6px"></div>
<div class="a" style="left:111px;top:573px;width:5px;height:5px;background:radial-gradient(circle at 0 100%,#0a0a0a 4.5px,#fff 5.5px);"></div>
<div class="a" style="left:173px;top:573px;width:5px;height:5px;background:radial-gradient(circle at 100% 100%,#0a0a0a 4.5px,#fff 5.5px);"></div>
<div class="t" style="left:124px;top:579px;font-size:13.5px;line-height:15px;height:15px;letter-spacing:-0.6px;font-weight:bold;color:#383838;">Sheet1</div>
<div class="a" style="left:124.2px;top:596px;width:40.6px;height:2px;background:#1e7145;"></div>
<div class="a" style="left:177px;top:581px;width:1px;height:17px;background:#8a8a8a;"></div>
<svg style="left:220px;top:583px" width="11" height="11" viewBox="0 0 11 11"><path d="M5.5 0v11M0 5.5h11" stroke="#ddd" stroke-width="1.2"/></svg>
<div class="a" style="left:640px;top:586px;width:2px;height:2px;background:#ddd;box-shadow:0 3.5px 0 #ddd,0 7px 0 #ddd"></div>
<svg style="left:662px;top:584.5px" width="7" height="9" viewBox="0 0 7 9"><path d="M6.5 0v9l-6.5-4.5z" fill="#a0a0a0"/></svg>
<div class="a" style="left:673.6px;top:584px;width:328.4px;height:9px;background:#9d9d9d;border-radius:5px"></div>
<svg style="left:1033.5px;top:584.5px" width="7" height="9" viewBox="0 0 7 9"><path d="M0 0v9l6.5-4.5z" fill="#a0a0a0"/></svg>
<div class="a" style="left:0px;top:605px;width:1057px;height:18px;background:#1f1f1f;"></div>
<div class="t" style="left:11.3px;top:609px;font-size:11.75px;line-height:13px;height:13px;letter-spacing:-0.58px;color:#f0f0f0;">Ready</div>
<svg style="left:62px;top:610px" width="15" height="12" viewBox="0 0 15 12"><path d="M0.5 11v-10.5h12.5v3.5M0.5 3.5h12.5M3 6h3M3 8.5h2" fill="none" stroke="#ddd"/><circle cx="10" cy="8" r="3" fill="none" stroke="#ddd" stroke-width="1.1"/><circle cx="10" cy="8" r="0.8" fill="#ddd"/></svg>
<svg style="left:94px;top:609px" width="14" height="13" viewBox="0 0 14 13"><circle cx="6" cy="2" r="1.6" fill="none" stroke="#ddd"/><path d="M1 4.5l5 1 5-1M6 5.5v3l-2.5 4M6 8.5l1.5 2" fill="none" stroke="#ddd" stroke-width="1.1"/><path d="M8 10.5l2 2 3.5-4" fill="none" stroke="#ddd" stroke-width="1.1"/></svg>
<div class="t" style="left:112.4px;top:609px;font-size:12px;line-height:14px;height:14px;letter-spacing:-0.2px;color:#f0f0f0;">Accessibility: Good to go</div>
<div class="t" style="left:485.5px;top:609px;font-size:12px;line-height:14px;height:14px;letter-spacing:-0.61px;color:#f0f0f0;">Average: 2930.285714</div>
<div class="t" style="left:610.7px;top:609px;font-size:12px;line-height:14px;height:14px;letter-spacing:-0.22px;color:#f0f0f0;">Count: 14</div>
<div class="t" style="left:676.5px;top:609px;font-size:11.75px;line-height:13px;height:13px;letter-spacing:-0.57px;color:#f0f0f0;">Sum: 41024</div>
<div class="a" style="left:753px;top:605px;width:40px;height:18px;background:#363636;"></div>
<svg style="left:766px;top:609px" width="13" height="13" viewBox="0 0 13 13"><path d="M0.5 0.5h12v12h-12zM0.5 4.5h12M0.5 8.5h12M4.5 0.5v12M8.5 0.5v12" fill="none" stroke="#f0f0f0"/></svg>
<svg style="left:806.5px;top:609px" width="13" height="13" viewBox="0 0 13 13"><rect x="0.5" y="0.5" width="12" height="12" fill="none" stroke="#f0f0f0"/><rect x="3.5" y="3.5" width="6" height="7" fill="none" stroke="#f0f0f0"/><path d="M5 6h3M5 8h3" stroke="#f0f0f0"/></svg>
<svg style="left:847px;top:609px" width="13" height="13" viewBox="0 0 13 13"><path d="M0.5 12.5v-12h12v8h-8v4z M4.5 0.5v8" fill="none" stroke="#f0f0f0"/></svg>
<div class="a" style="left:879px;top:615px;width:7.5px;height:1px;background:#ddd;"></div>
<div class="a" style="left:891.5px;top:615px;width:100px;height:1px;background:#8a8a8a;"></div>
<div class="a" style="left:940px;top:610px;width:5px;height:12px;background:#bdbdbd;"></div>
<svg style="left:996.5px;top:611.5px" width="8" height="8" viewBox="0 0 8 8"><path d="M4 0v8M0 4h8" stroke="#ddd" stroke-width="1.1"/></svg>
<div class="t" style="left:1017.7px;top:610px;font-size:11.25px;line-height:12px;height:12px;letter-spacing:-0.57px;color:#f0f0f0;">100%</div>
<div class="a" style="left:247px;top:232px;width:370px;height:133px;border-radius:9px;background:#f0f0f0;border:1px solid #2c2c2c;box-shadow:0 10px 28px rgba(0,0,0,0.320),0 2px 12px rgba(0,0,0,0.2);overflow:hidden"><div style="height:30px;background:#000"></div></div>
<div class="t" style="left:255.5px;top:241px;font-size:12.5px;line-height:14px;height:14px;letter-spacing:-0.34px;">Duplicate Values</div>
<div class="t" style="left:544.4px;top:241px;font-size:12px;line-height:14px;height:14px;">?</div>
<svg style="left:587.5px;top:242px" width="11" height="11" viewBox="0 0 11 11"><path d="M0.5 0.5l10 10M10.5 0.5l-10 10" stroke="#fff" stroke-width="1.1"/></svg>
<div class="t" style="left:254.7px;top:271px;font-size:11px;line-height:12px;height:12px;letter-spacing:-0.05px;font-weight:bold;color:#000;">Format cells that contain:</div>
<div class="a" style="left:254px;top:298px;width:80px;height:21px;background:#fff;border:1px solid #b8b8b8"></div>
<div class="t" style="left:257.5px;top:302px;font-size:11px;line-height:12px;height:12px;letter-spacing:0.5px;color:#000;">Duplicate</div>
<div class="a" style="left:315px;top:300px;width:17px;height:17px;background:#fff;border:1px solid #c8c8c8;border-radius:3px"></div>
<svg style="left:320px;top:307.75px" width="7" height="3.5" viewBox="0 0 7 3.5"><path d="M0 0l3.5 3.5 3.5 -3.5" fill="none" stroke="#555" stroke-width="0.9" stroke-linejoin="miter"/></svg>
<div class="t" style="left:344.3px;top:302px;font-size:11px;line-height:12px;height:12px;letter-spacing:0.34px;color:#000;">values with</div>
<div class="a" style="left:412px;top:298px;width:198px;height:21px;background:#fff;border:1px solid #b4b4b4"></div>
<div class="t" style="left:415.7px;top:302px;font-size:11px;line-height:12px;height:12px;letter-spacing:0.24px;color:#000;">Light Red Fill with Dark Red Text</div>
<div class="a" style="left:591px;top:300px;width:17px;height:17px;background:#fff;border:1px solid #2a7fd0;border-radius:3px"></div>
<svg style="left:596px;top:307.75px" width="7" height="3.5" viewBox="0 0 7 3.5"><path d="M0 0l3.5 3.5 3.5 -3.5" fill="none" stroke="#555" stroke-width="0.9" stroke-linejoin="miter"/></svg>
<div class="a" style="left:412px;top:319px;width:198px;height:93px;background:#fff;border:1px solid #4a4a4a"></div>
<div class="a" style="left:413px;top:321px;width:196px;height:12px;background:#99c9ef;border:1px dotted #222"></div>
<div class="t" style="left:414.5px;top:321px;font-size:11px;line-height:12px;height:12px;letter-spacing:0.23px;color:#000;">Light Red Fill with Dark Red Text</div>
<div class="t" style="left:415.1px;top:334px;font-size:11px;line-height:12px;height:12px;letter-spacing:0.27px;color:#000;">Yellow Fill with Dark Yellow Text</div>
<div class="t" style="left:414.9px;top:347px;font-size:11px;line-height:12px;height:12px;letter-spacing:0.21px;color:#000;">Green Fill with Dark Green Text</div>
<div class="t" style="left:414.5px;top:360px;font-size:11px;line-height:12px;height:12px;letter-spacing:0.29px;color:#000;">Light Red Fill</div>
<div class="t" style="left:414.5px;top:373px;font-size:11px;line-height:12px;height:12px;letter-spacing:0.07px;color:#000;">Red Text</div>
<div class="t" style="left:414.5px;top:386px;font-size:11px;line-height:12px;height:12px;letter-spacing:0.09px;color:#000;">Red Border</div>
<div class="t" style="left:414.9px;top:399px;font-size:11px;line-height:12px;height:12px;letter-spacing:0.16px;color:#000;">Custom Format...</div>
</body></html>
